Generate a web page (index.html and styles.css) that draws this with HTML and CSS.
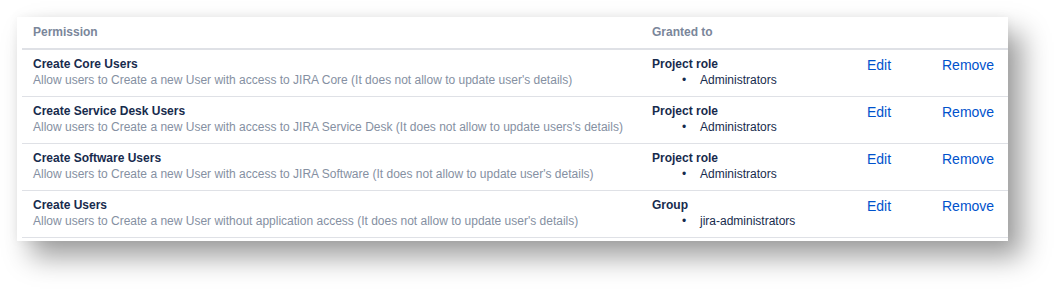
FILE: index.html
```html
<!DOCTYPE html>
<html>
<head>
<meta charset="utf-8">
<link rel="stylesheet" href="styles.css">
</head>
<body>
<div class="card">
  <div class="table">
    <div class="row head">
      <div class="cell">Permission</div>
      <div class="cell">Granted to</div>
      <div class="cell"></div>
      <div class="cell"></div>
    </div>
    <div class="row">
      <div class="cell">
        <div class="title">Create Core Users</div>
        <div class="desc">Allow users to Create a new User with access to JIRA Core (It does not allow to update user's details)</div>
      </div>
      <div class="cell">
        <div class="title">Project role</div>
        <ul class="list"><li>Administrators</li></ul>
      </div>
      <div class="cell act"><a href="#">Edit</a></div>
      <div class="cell act"><a href="#">Remove</a></div>
    </div>
    <div class="row">
      <div class="cell">
        <div class="title">Create Service Desk Users</div>
        <div class="desc">Allow users to Create a new User with access to JIRA Service Desk (It does not allow to update users's details)</div>
      </div>
      <div class="cell">
        <div class="title">Project role</div>
        <ul class="list"><li>Administrators</li></ul>
      </div>
      <div class="cell act"><a href="#">Edit</a></div>
      <div class="cell act"><a href="#">Remove</a></div>
    </div>
    <div class="row">
      <div class="cell">
        <div class="title">Create Software Users</div>
        <div class="desc">Allow users to Create a new User with access to JIRA Software (It does not allow to update user's details)</div>
      </div>
      <div class="cell">
        <div class="title">Project role</div>
        <ul class="list"><li>Administrators</li></ul>
      </div>
      <div class="cell act"><a href="#">Edit</a></div>
      <div class="cell act"><a href="#">Remove</a></div>
    </div>
    <div class="row">
      <div class="cell">
        <div class="title">Create Users</div>
        <div class="desc">Allow users to Create a new User without application access (It does not allow to update user's details)</div>
      </div>
      <div class="cell">
        <div class="title">Group</div>
        <ul class="list"><li>jira-administrators</li></ul>
      </div>
      <div class="cell act"><a href="#">Edit</a></div>
      <div class="cell act"><a href="#">Remove</a></div>
    </div>
  </div>
</div>
</body>
</html>
```

FILE: styles.css
```css
html, body {
  margin: 0;
  padding: 0;
  background: #ffffff;
}
body {
  font-family: "Liberation Sans", Arial, sans-serif;
  font-size: 12px;
  color: #172b4d;
  padding-top: 17px;
  padding-bottom: 48px;
}
.card {
  margin-left: 17px;
  width: 991px;
  height: 224px;
  background: #ffffff;
  box-shadow: 14px 16px 26px rgba(0, 0, 0, 0.38), 0 0 10px rgba(0, 0, 0, 0.05);
  padding-left: 5px;
  box-sizing: border-box;
}
.table {
  display: flex;
  flex-direction: column;
}
.row {
  display: grid;
  grid-template-columns: 619px 215px 75px 77px;
  height: 46px;
  border-bottom: 1px solid #dfe1e6;
}
.row.head {
  height: 31px;
  border-bottom: 2px solid #dfe1e6;
}
.cell {
  padding: 6px 11px 0 11px;
  line-height: 16px;
  white-space: nowrap;
}
.head .cell {
  padding-top: 8px;
  line-height: 15px;
  font-weight: bold;
  color: #7a869a;
}
.title {
  font-weight: bold;
  color: #172b4d;
}
.desc {
  color: #8590a2;
}
.list {
  margin: 0;
  padding-left: 30px;
  list-style: none;
  color: #172b4d;
}
.list li::before {
  content: "•";
  display: inline-block;
  width: 18px;
}
.act {
  padding-top: 7px;
  font-size: 14px;
}
.act a {
  color: #0052cc;
  text-decoration: none;
}
```
